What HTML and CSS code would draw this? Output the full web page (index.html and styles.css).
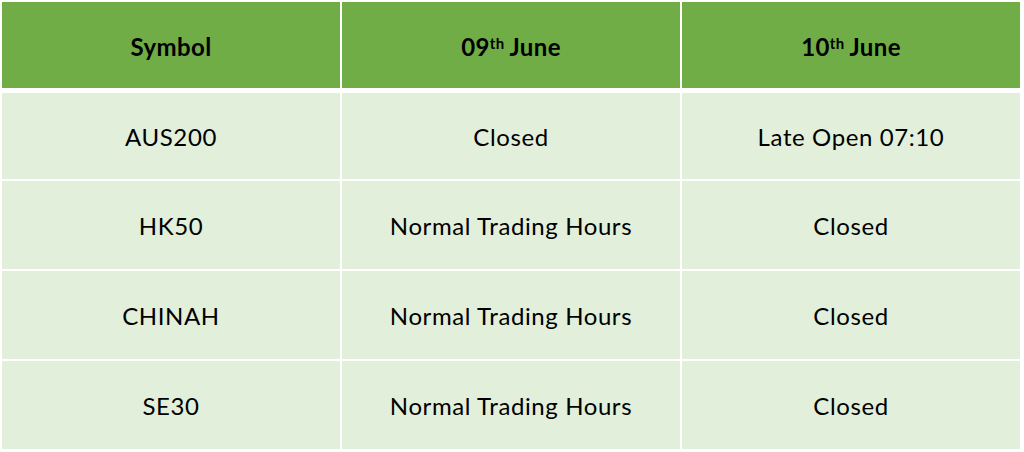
FILE: index.html
```html
<!DOCTYPE html>
<html>
<head>
<meta charset="utf-8">
<link rel="stylesheet" href="styles.css">
</head>
<body>
<div class="table">
  <div class="row head">
    <div class="cell">Symbol</div>
    <div class="cell">09<sup>th</sup> June</div>
    <div class="cell">10<sup>th</sup> June</div>
  </div>
  <div class="body">
    <div class="row first">
      <div class="cell">AUS200</div>
      <div class="cell">Closed</div>
      <div class="cell">Late Open 07:10</div>
    </div>
    <div class="row">
      <div class="cell">HK50</div>
      <div class="cell">Normal Trading Hours</div>
      <div class="cell">Closed</div>
    </div>
    <div class="row">
      <div class="cell">CHINAH</div>
      <div class="cell">Normal Trading Hours</div>
      <div class="cell">Closed</div>
    </div>
    <div class="row">
      <div class="cell">SE30</div>
      <div class="cell">Normal Trading Hours</div>
      <div class="cell">Closed</div>
    </div>
  </div>
</div>
</body>
</html>
```
FILE: styles.css
```css
html, body {
  margin: 0;
  padding: 0;
  background: #ffffff;
}
.table {
  display: flex;
  flex-direction: column;
  gap: 5px;
  padding: 2px 0 0 2px;
  font-family: Lato, "Open Sans", sans-serif;
  font-size: 24px;
  letter-spacing: 0.6px;
  color: #000;
}
.body {
  display: flex;
  flex-direction: column;
  gap: 2px;
}
.row {
  display: grid;
  grid-template-columns: 338px 338px 338px;
  column-gap: 2px;
  height: 88px;
}
.row.first {
  height: 86px;
}
.cell {
  display: flex;
  align-items: center;
  justify-content: center;
  background: #e2efda;
}
.narrow {
  letter-spacing: 0;
}
.head {
  height: 86px;
}
.head .cell {
  background: #70ad47;
  font-weight: bold;
  padding-top: 2px;
  letter-spacing: 0.4px;
}
sup {
  font-size: 15px;
  line-height: 0;
  position: relative;
  top: -3px;
  margin-right: 5px;
  letter-spacing: 0.3px;
}
```
